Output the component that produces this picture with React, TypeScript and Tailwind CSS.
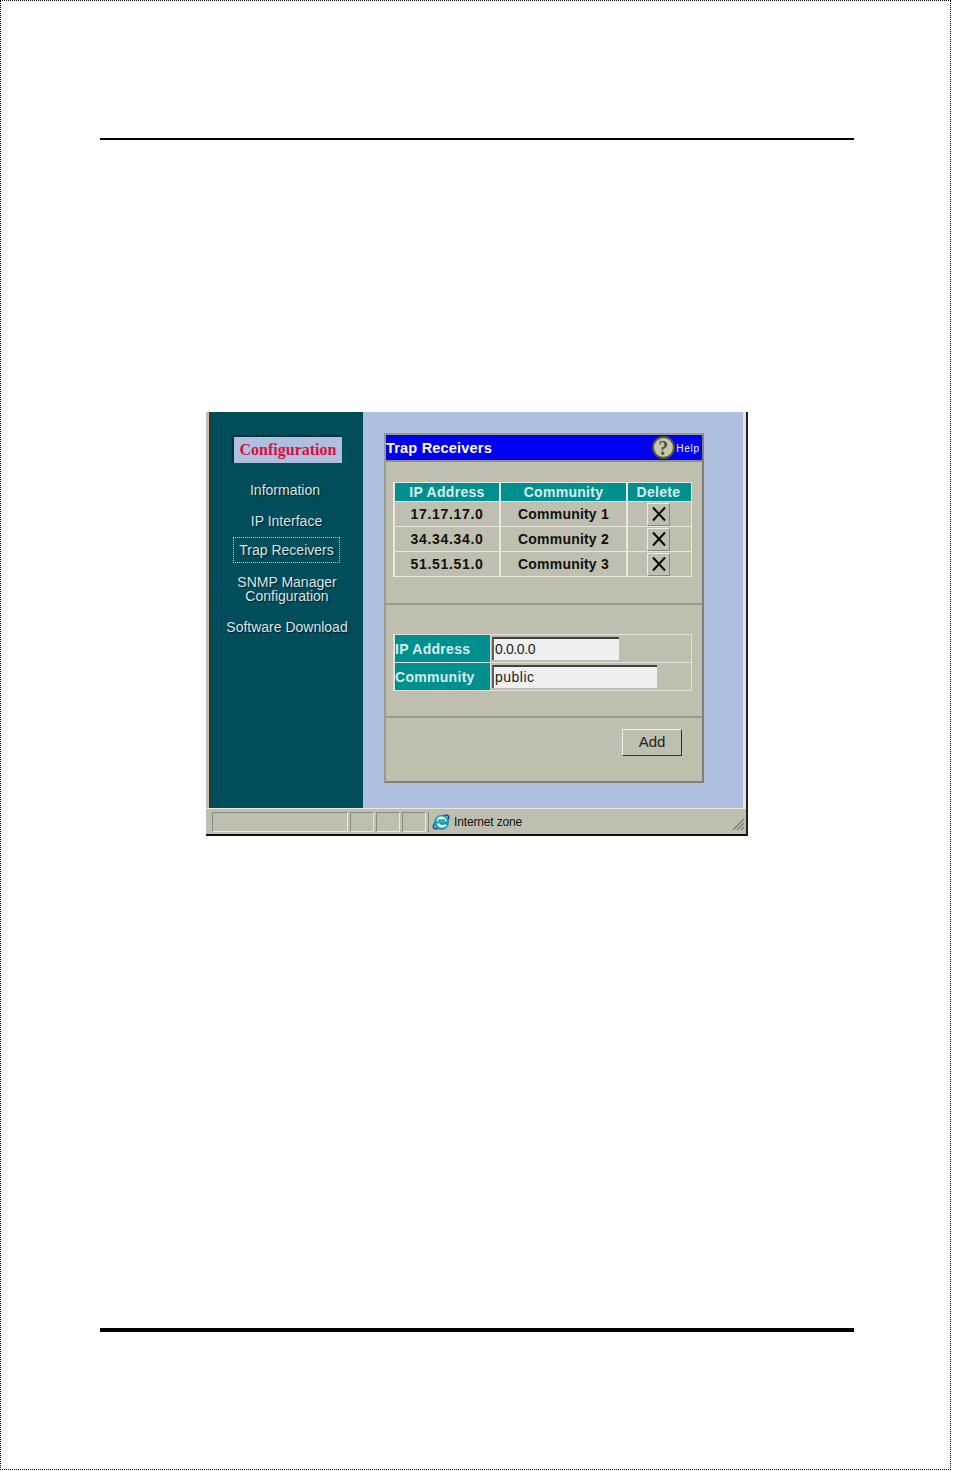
const NAV_SHADOW = "[text-shadow:1px_1px_1px_#001f2b]";

const TRAPS = [
  { ip: "17.17.17.0", name: "Community 1" },
  { ip: "34.34.34.0", name: "Community 2" },
  { ip: "51.51.51.0", name: "Community 3" },
];

function IeIcon() {
  return (
    <svg width="20" height="20" viewBox="0 0 20 20" className="flex-none">
      <ellipse cx="10" cy="10" rx="9.5" ry="4" transform="rotate(-40 10 10)" fill="none" stroke="#2048c0" strokeWidth="1.6" />
      <circle cx="10.5" cy="10.5" r="7.5" fill="#1e9aa8" />
      <path d="M5.5 9.5h10c0-3.2-2.2-5-5-5s-5 1.8-5 5z" fill="#e0f4f4" />
      <rect x="7" y="7.4" width="7" height="2" fill="#1e9aa8" />
      <path d="M5.5 11.5h3.4c.4 1.8 3.8 2.2 5.4.4l1.6 1.6c-2.8 3.3-9.4 2.9-10.4-2z" fill="#e0f4f4" />
    </svg>
  );
}

function HelpIcon() {
  return (
    <span className="flex h-[23px] w-[23px] flex-none items-center justify-center rounded-full border-2 border-[#55553c] bg-[#c8c8a8] font-['Liberation_Serif',serif] text-[20px] leading-none font-bold text-[#55553c]">
      ?
    </span>
  );
}

function CloseButton() {
  return (
    <span className="mr-[2px] flex h-[23px] w-[23px] items-center justify-center border border-t-[#eeeee8] border-r-[#8a8a80] border-b-[#8a8a80] border-l-[#eeeee8]">
      <svg width="16" height="16" viewBox="0 0 16 16">
        <path d="M2 1.5 14 14.5M14 1.5 2 14.5" stroke="#000" strokeWidth="1.9" fill="none" />
      </svg>
    </span>
  );
}

function Sidebar() {
  return (
    <aside className={`flex h-full w-[152px] flex-none flex-col items-center bg-[#004d5c] pt-[25px] font-['Liberation_Sans',sans-serif] text-[14px] leading-[14px] text-[#dce4e4] ${NAV_SHADOW}`}>
      <div className="mt-[-2px] flex h-[28px] w-[110px] items-center justify-center border-t-2 border-l-2 border-t-[#003040] border-l-[#003040] bg-[#afbfe0] font-['Liberation_Serif',serif] text-[16px] font-bold text-[#d8103c] [text-shadow:none]">
        Configuration
      </div>
      <div className="mt-[20px] ml-[-4px]">Information</div>
      <div className="mt-[17px] ml-[-1px]">IP Interface</div>
      <div className="mt-[9px] ml-[-1px] flex h-[26px] w-[107px] items-center justify-center border border-dotted border-[#d0d0c0]">Trap Receivers</div>
      <div className="mt-[12px] text-center">
        SNMP Manager
        <br />
        Configuration
      </div>
      <div className="mt-[17px] whitespace-nowrap">Software Download</div>
    </aside>
  );
}

function TrapPanel() {
  return (
    <section className="flex h-[350px] w-[320px] flex-col border-2 border-t-[#9a9a90] border-r-[#808078] border-b-[#808078] border-l-[#9a9a90] bg-[#bfbfb0] font-['Liberation_Sans',sans-serif]">
      <header className="flex h-[27px] flex-none items-center justify-between border-b-2 border-[#8f8f88] bg-[#0000f0] pr-[2px] text-white">
        <span className="pt-[2px] text-[14.5px] font-bold tracking-[0.2px]">Trap Receivers</span>
        <span className="flex items-center gap-[1px] text-[10px] tracking-[0.8px]">
          <HelpIcon />
          <span className="pt-[2px]">Help</span>
        </span>
      </header>

      <div className="flex h-[143px] flex-none flex-col border-b-2 border-[#9a9a90] px-[7px] pt-[20px]">
        <div className="grid w-[299px] grid-cols-[104px_125px_1fr] gap-x-[2px] gap-y-[1px] border border-l-2 border-[#e8e8e0] bg-[#e8e8e0] text-[14px] font-bold">
          <div className="flex h-[18px] items-center justify-center bg-[#008f8f] tracking-[0.3px] text-[#d8eeea]">IP Address</div>
          <div className="flex h-[18px] items-center justify-center bg-[#008f8f] tracking-[0.3px] text-[#d8eeea]">Community</div>
          <div className="flex h-[18px] items-center justify-center bg-[#008f8f] pr-[2px] tracking-[0.3px] text-[#d8eeea]">Delete</div>
          {TRAPS.map((t) => (
            <div key={t.ip} className="contents">
              <div className="flex h-[24px] items-center justify-center bg-[#bfbfb0] tracking-[0.7px] text-[#111]">{t.ip}</div>
              <div className="flex h-[24px] items-center justify-center bg-[#bfbfb0] tracking-[0.2px] text-[#111]">{t.name}</div>
              <div className="flex h-[24px] items-center justify-center bg-[#bfbfb0]">
                <CloseButton />
              </div>
            </div>
          ))}
        </div>
      </div>

      <div className="flex h-[113px] flex-none flex-col border-b-2 border-[#9a9a90] px-[7px] pt-[29px]">
        <div className="grid w-[299px] grid-cols-[95px_1fr] gap-[1px] border border-l-2 border-[#e0e0d8] bg-[#e0e0d8] text-[14px] tracking-[0.3px]">
          <div className="flex h-[27px] items-center bg-[#008f8f] pt-[2px] font-bold text-[#d8eeea]">IP Address</div>
          <div className="flex h-[27px] items-center bg-[#bfbfb0] pl-px">
            <div className="flex h-[23px] w-[127px] items-center border-t-2 border-l-2 border-t-[#404040] border-l-[#606060] bg-[#f0f0f0] pl-px text-[14px] font-normal tracking-[-0.4px] text-[#222]">0.0.0.0</div>
          </div>
          <div className="flex h-[27px] items-center bg-[#008f8f] pt-[2px] font-bold text-[#d8eeea]">Community</div>
          <div className="flex h-[27px] items-center bg-[#bfbfb0] pl-px">
            <div className="flex h-[23px] w-[165px] items-center border-t-2 border-l-2 border-t-[#404040] border-l-[#606060] bg-[#f0f0f0] pl-px text-[14px] font-normal tracking-[0.5px] text-[#222]">public</div>
          </div>
        </div>
      </div>

      <div className="flex flex-1 justify-end pt-[11px] pr-[20px]">
        <button type="button" className="h-[27px] w-[60px] border border-t-[#eeeee8] border-r-[#303030] border-b-[#303030] border-l-[#eeeee8] bg-[#bfbfb0] text-[15px] text-[#222]">
          Add
        </button>
      </div>
    </section>
  );
}

function StatusCell({ className }: { className: string }) {
  return <div className={`h-[20px] flex-none border border-t-[#8a8a80] border-r-[#e8e8e0] border-b-[#e8e8e0] border-l-[#8a8a80] ${className}`} />;
}

function BrowserShot() {
  return (
    <div className="ml-[206px] flex h-[424px] w-[542px] flex-col border-r-2 border-b-2 border-r-[#202020] border-b-[#101010] bg-[#bfbfb0]">
      <div className="flex h-[396px] flex-none pl-[3px]">
        <div className="w-[2px] flex-none bg-[#303838]" />
        <Sidebar />
        <div className="flex-1 bg-[#afbfe0] pt-[21px] pl-[21px]">
          <TrapPanel />
        </div>
        <div className="w-[3px] flex-none bg-[#e4e4dc]" />
      </div>
      <div className="flex flex-1 items-center gap-[2px] border-t border-[#e8e8e0] pl-[6px] font-['Liberation_Sans',sans-serif] text-[12px] tracking-[-0.15px] text-[#111]">
        <StatusCell className="w-[136px]" />
        <StatusCell className="w-[24px]" />
        <StatusCell className="w-[24px]" />
        <StatusCell className="w-[24px]" />
        <div className="flex h-[20px] flex-1 items-center gap-[3px] border-l border-[#8a8a80] pl-[2px]">
          <IeIcon />
          Internet zone
          <svg width="14" height="14" viewBox="0 0 14 14" className="mt-[5px] ml-auto mr-px">
            <path d="M13 2 2 13M13 6 6 13M13 10 10 13" stroke="#7a7a70" strokeWidth="1.2" fill="none" />
          </svg>
        </div>
      </div>
    </div>
  );
}

export default function App() {
  return (
    <div className="h-[1471px] w-[954px] bg-white">
      <div className="h-[1470px] w-[951px] border border-dotted border-black">
        <div className="mt-[137px] ml-[99px] h-[2px] w-[754px] bg-black" />
        <div className="h-[272px]" />
        <div className="ml-[-1px]">
          <BrowserShot />
        </div>
        <div className="mt-[492px] ml-[99px] h-[4px] w-[754px] bg-black" />
      </div>
    </div>
  );
}
